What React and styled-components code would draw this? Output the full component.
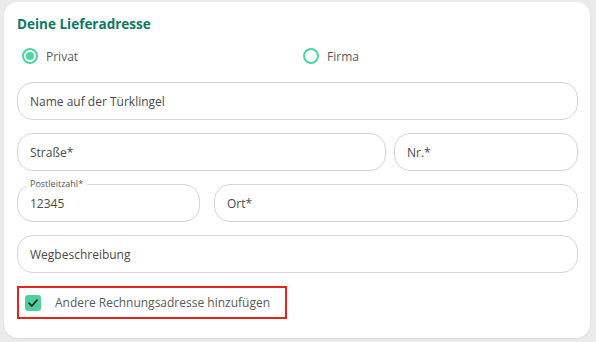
import React from 'react'
import styled, { createGlobalStyle } from 'styled-components'

const GlobalStyle = createGlobalStyle`
  html, body {
    margin: 0;
    padding: 0;
    background: #ebebeb;
    font-family: "Open Sans", "Noto Sans", sans-serif;
  }
  * { box-sizing: border-box; }
`

const Page = styled.div`
  width: 596px;
  height: 342px;
  padding: 2px 6px 4px 4px;
`

const Card = styled.section`
  height: 100%;
  background: #ffffff;
  border-radius: 14px;
  box-shadow: 0 1px 2px rgba(0, 0, 0, 0.08);
  padding: 13px 12px 0 13px;
  display: flex;
  flex-direction: column;
`

const Title = styled.h2`
  margin: 0;
  font-size: 13.5px;
  font-weight: 700;
  color: #0b7a61;
  line-height: 18px;
`

const RadioRow = styled.div`
  display: grid;
  grid-template-columns: 281px 1fr;
  padding: 15px 0 0 5px;
  height: 49px;
`

const RadioOption = styled.label`
  display: flex;
  align-items: center;
  gap: 8px;
  font-size: 12px;
  color: #5a5a5a;
  height: 16px;
`

const RadioCircle = styled.span`
  width: 16px;
  height: 16px;
  border-radius: 50%;
  border: 2px solid #4fd3a0;
  display: flex;
  align-items: center;
  justify-content: center;

  &::after {
    content: '';
    width: 8px;
    height: 8px;
    border-radius: 50%;
    background: ${p => (p.$checked ? '#4fd3a0' : 'transparent')};
  }
`

const Fields = styled.div`
  display: flex;
  flex-direction: column;
  gap: 13px;
`

const Row = styled.div`
  display: flex;
  gap: ${p => p.$gap || 8}px;
`

const Field = styled.div`
  position: relative;
  flex: ${p => (p.$width ? `0 0 ${p.$width}px` : '1')};
  height: 38px;
  border: 1px solid #d6d6d6;
  border-radius: 16px;
  display: flex;
  align-items: center;
  padding: 0 12px;
  font-size: 12px;
  color: #4a4a4a;
`

const FloatLabel = styled.span`
  position: absolute;
  top: -7px;
  left: 8px;
  padding: 0 4px;
  background: #fff;
  font-size: 9px;
  line-height: 12px;
  color: #555;
`

const CheckRow = styled.label`
  margin-top: 13px;
  width: 270px;
  height: 33px;
  border: 2px solid #e8231c;
  display: flex;
  align-items: center;
  gap: 14px;
  padding-left: 6px;
  font-size: 12px;
  color: #5a5a5a;
`

const CheckBox = styled.span`
  width: 16px;
  height: 16px;
  border-radius: 3px;
  background: #4fcf9c;
  display: flex;
  align-items: center;
  justify-content: center;
`

const App = () => {
  return (
    <>
      <GlobalStyle />
      <Page>
        <Card>
          <Title>Deine Lieferadresse</Title>
          <RadioRow>
            <RadioOption>
              <RadioCircle $checked />
              Privat
            </RadioOption>
            <RadioOption>
              <RadioCircle />
              Firma
            </RadioOption>
          </RadioRow>
          <Fields>
            <Row>
              <Field>Name auf der Türklingel</Field>
            </Row>
            <Row>
              <Field>Straße*</Field>
              <Field $width={184}>Nr.*</Field>
            </Row>
            <Row $gap={14}>
              <Field $width={183}>
                <FloatLabel>Postleitzahl*</FloatLabel>
                12345
              </Field>
              <Field>Ort*</Field>
            </Row>
            <Row>
              <Field>Wegbeschreibung</Field>
            </Row>
          </Fields>
          <CheckRow>
            <CheckBox>
              <svg width="12" height="12" viewBox="0 0 12 12">
                <path d="M2 6.2 L4.8 9 L10 3.2" fill="none" stroke="#1f2a26" strokeWidth="1.8" strokeLinecap="round" strokeLinejoin="round" />
              </svg>
            </CheckBox>
            Andere Rechnungsadresse hinzufügen
          </CheckRow>
        </Card>
      </Page>
    </>
  )
}

export default App
